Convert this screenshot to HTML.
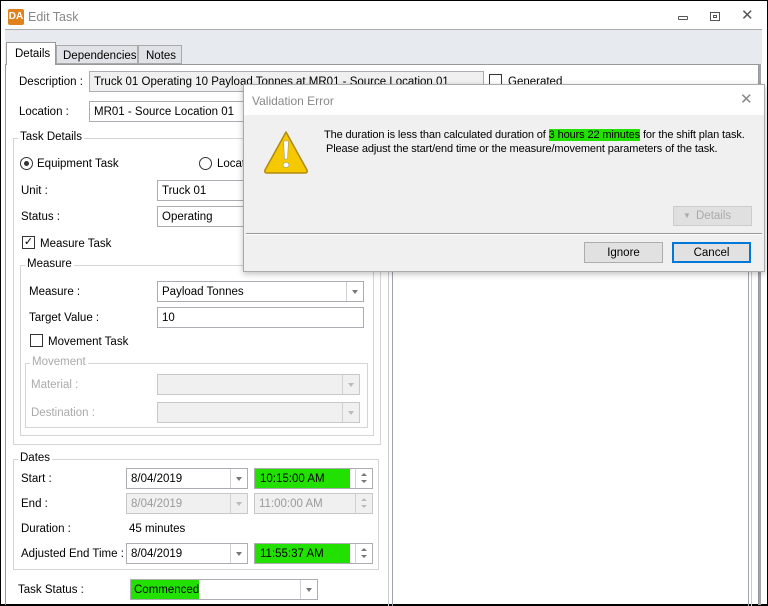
<!DOCTYPE html>
<html><head><style>
*{box-sizing:border-box;margin:0;padding:0}
body{width:768px;height:606px;overflow:hidden;background:#fff;font-family:"Liberation Sans",sans-serif;font-size:11.5px;color:#000;position:relative}
.a{position:absolute}
.win{left:0;top:0;width:768px;height:606px;border:1px solid #000;border-bottom:2px solid #000;background:#fff}
.in{position:absolute;background:#fff;border:1px solid #abadb3;padding:4px 4px 2px;white-space:nowrap;overflow:hidden;height:21px;line-height:13px}
.dis{background:#f0f0f0;border-color:#c8c8c8;color:#9a9a9a}
.dd{position:absolute;right:0;top:0;bottom:0;width:17px;border-left:1px solid #d0d0d0;background:#fff}
.dd:after{content:"";position:absolute;left:5px;top:8px;border:3px solid transparent;border-top:4px solid #777}
.sp{position:absolute;right:0;top:0;bottom:0;width:17px;border-left:1px solid #d0d0d0;background:#fff}
.sp:before{content:"";position:absolute;left:5px;top:1px;border:3px solid transparent;border-bottom:3px solid #777}
.sp:after{content:"";position:absolute;left:5px;top:11px;border:3px solid transparent;border-top:3px solid #777}
.dis .dd,.dis .sp{background:#f0f0f0}.dis .dd:after,.dis .sp:after{border-top-color:#bbb}.dis .sp:before{border-bottom-color:#bbb}
.grp{position:absolute;border:1px solid #d5d5d5}
.gl{position:absolute;background:#fff;padding:0 2px;top:-8px;left:4px}
.cb{position:absolute;width:13px;height:13px;border:1px solid #333;background:#fff}
.hl{background:#22e000}
</style></head><body>
<div class="a win"></div>
<div class="a" style="left:8px;top:9px;width:16px;height:16px;background:#e0821c;border-radius:2px;color:#fff;font-weight:bold;font-size:10px;line-height:16px;text-align:center">DA</div>
<div class="a" style="left:28px;top:10px;color:#888;font-size:12.5px">Edit Task</div>
<div class="a" style="left:678px;top:16px;width:10px;height:4px;border:1px solid #555;border-radius:1px"></div>
<div class="a" style="left:710px;top:12px;width:10px;height:9px;border:1px solid #555"><div class="a" style="left:2px;top:2px;width:4px;height:3px;border:1px solid #555"></div></div>
<div class="a" style="left:741px;top:6px;font-size:15px;color:#555">✕</div>
<div class="a" style="left:5px;top:29px;width:757px;height:35px;background:#e7eaef;border-top:1px solid #aaa"></div>
<div class="a" style="left:5px;top:64px;width:754px;height:541px;border-left:1px solid #999;border-right:1px solid #999;border-top:1px solid #999"></div>
<div class="a" style="left:6px;top:42px;width:50px;height:23px;background:#fff;border:1px solid #999;border-bottom:none;padding:5px 0 0 8px">Details</div>
<div class="a" style="left:56px;top:45px;width:82px;height:19px;background:#dfe3e8;border:1px solid #aaa;padding:4px 0 0 6px">Dependencies</div>
<div class="a" style="left:138px;top:45px;width:44px;height:19px;background:#dfe3e8;border:1px solid #aaa;padding:4px 0 0 7px">Notes</div>
<div class="a" style="left:759px;top:64px;width:2px;height:541px;background:#a0a4ab"></div>

<div class="a" style="left:19px;top:76px">Description :</div>
<div class="in" style="left:89px;top:71px;width:395px;background:#f0f0f0">Truck 01 Operating 10 Payload Tonnes at MR01 - Source Location 01</div>
<div class="cb" style="left:489px;top:74px"></div><div class="a" style="left:508px;top:76px">Generated</div>
<div class="a" style="left:19px;top:106px">Location :</div>
<div class="in" style="left:89px;top:101px;width:300px">MR01 - Source Location 01</div>

<div class="a" style="left:388px;top:270px;width:1px;height:336px;background:#ccc"></div>
<div class="a" style="left:392px;top:270px;width:1px;height:336px;background:#a0a4ab"></div>
<div class="a" style="left:748px;top:270px;width:1px;height:336px;background:#a0a4ab"></div>
<div class="a" style="left:751px;top:270px;width:1px;height:336px;background:#ccc"></div>

<div class="grp" style="left:13px;top:138px;width:368px;height:307px"><div class="gl">Task Details</div></div>
<div class="a" style="left:20px;top:157px;width:13px;height:13px;border:1px solid #333;border-radius:50%"><div class="a" style="left:3px;top:3px;width:5px;height:5px;background:#333;border-radius:50%"></div></div>
<div class="a" style="left:37px;top:158px">Equipment Task</div>
<div class="a" style="left:199px;top:157px;width:13px;height:13px;border:1px solid #333;border-radius:50%"></div>
<div class="a" style="left:217px;top:158px">Locat</div>
<div class="a" style="left:21px;top:185px">Unit :</div>
<div class="in" style="left:157px;top:180px;width:100px">Truck 01</div>
<div class="a" style="left:21px;top:211px">Status :</div>
<div class="in" style="left:157px;top:206px;width:100px">Operating</div>
<div class="cb" style="left:22px;top:236px;font-size:11px;line-height:10px;text-align:center">✓</div>
<div class="a" style="left:40px;top:238px">Measure Task</div>

<div class="grp" style="left:20px;top:265px;width:354px;height:171px"><div class="gl">Measure</div></div>
<div class="a" style="left:29px;top:286px">Measure :</div>
<div class="in" style="left:157px;top:281px;width:207px">Payload Tonnes<div class="dd"></div></div>
<div class="a" style="left:29px;top:312px">Target Value :</div>
<div class="in" style="left:157px;top:307px;width:207px">10</div>
<div class="cb" style="left:30px;top:334px"></div>
<div class="a" style="left:48px;top:336px">Movement Task</div>
<div class="grp" style="left:25px;top:363px;width:343px;height:65px"><div class="gl" style="color:#aaa">Movement</div></div>
<div class="a" style="left:31px;top:379px;color:#aaa">Material :</div>
<div class="in dis" style="left:157px;top:374px;width:203px"><div class="dd"></div></div>
<div class="a" style="left:31px;top:407px;color:#aaa">Destination :</div>
<div class="in dis" style="left:157px;top:402px;width:203px"><div class="dd"></div></div>

<div class="grp" style="left:13px;top:459px;width:366px;height:111px"><div class="gl">Dates</div></div>
<div class="a" style="left:21px;top:473px">Start :</div>
<div class="in" style="left:126px;top:468px;width:122px">8/04/2019<div class="dd"></div></div>
<div class="in" style="left:254px;top:468px;width:119px;padding-left:0"><span class="hl" style="display:inline-block;padding:4px 0 3px 5px;width:95px;margin-top:-4px">10:15:00 AM</span><div class="sp"></div></div>
<div class="a" style="left:21px;top:498px">End :</div>
<div class="in dis" style="left:126px;top:493px;width:122px">8/04/2019<div class="dd"></div></div>
<div class="in dis" style="left:254px;top:493px;width:119px">11:00:00 AM<div class="sp"></div></div>
<div class="a" style="left:21px;top:523px">Duration :</div>
<div class="a" style="left:129px;top:523px">45 minutes</div>
<div class="a" style="left:21px;top:548px">Adjusted End Time :</div>
<div class="in" style="left:126px;top:543px;width:122px">8/04/2019<div class="dd"></div></div>
<div class="in" style="left:254px;top:543px;width:119px;padding-left:0"><span class="hl" style="display:inline-block;padding:4px 0 3px 5px;width:95px;margin-top:-4px">11:55:37 AM</span><div class="sp"></div></div>
<div class="a" style="left:18px;top:584px">Task Status :</div>
<div class="in" style="left:130px;top:579px;width:188px;padding-left:0"><span class="hl" style="display:inline-block;padding:4px 3px 3px;width:68px;margin-top:-4px">Commenced</span><div class="dd"></div></div>

<div class="a" style="left:243px;top:84px;width:522px;height:188px;background:#f0f0f0;border:1px solid #aaa;box-shadow:0 2px 6px rgba(0,0,0,.25)">
 <div class="a" style="left:0;top:0;width:520px;height:30px;background:#fff"></div>
 <div class="a" style="left:8px;top:9px;color:#888;font-size:12px">Validation Error</div>
 <div class="a" style="left:496px;top:5px;color:#888;font-size:15px">✕</div>
 <svg class="a" style="left:18px;top:44px" width="48" height="46" viewBox="0 0 48 46"><path d="M24 3 L45 41 Q46 44 43 44 L5 44 Q2 44 3 41 Z" fill="#f5c800" stroke="#b08a10" stroke-width="1.5" stroke-linejoin="round"/><path d="M21.5 12 L26.5 12 L25.5 30 L22.5 30 Z" fill="#fff" stroke="#998" stroke-width=".6"/><ellipse cx="24" cy="36" rx="3" ry="2.5" fill="#fff" stroke="#998" stroke-width=".6"/></svg>
 <div class="a" style="left:80px;top:44px;white-space:nowrap;font-size:11px;letter-spacing:-0.12px">The duration is less than calculated duration of <span class="hl">3 hours 22 minutes</span> for the shift plan task.</div>
 <div class="a" style="left:82px;top:58px;white-space:nowrap;font-size:11px;letter-spacing:-0.12px">Please adjust the start/end time or the measure/movement parameters of the task.</div>
 <div class="a" style="left:429px;top:121px;width:79px;height:20px;background:#e0e0e0;border:1px solid #ccc;color:#aaa;padding:3px 0 0 22px">Details<span class="a" style="left:9px;top:4px;font-size:8px">▼</span></div>
 <div class="a" style="left:2px;top:148px;width:516px;height:2px;background:#999;border-bottom:1px solid #fff"></div>
 <div class="a" style="left:340px;top:157px;width:79px;height:21px;background:#e1e1e1;border:1px solid #adadad;text-align:center;padding-top:4px">Ignore</div>
 <div class="a" style="left:428px;top:157px;width:79px;height:21px;background:#e1e1e1;border:2px solid #0078d7;text-align:center;padding-top:3px">Cancel</div>
</div>
</body></html>
